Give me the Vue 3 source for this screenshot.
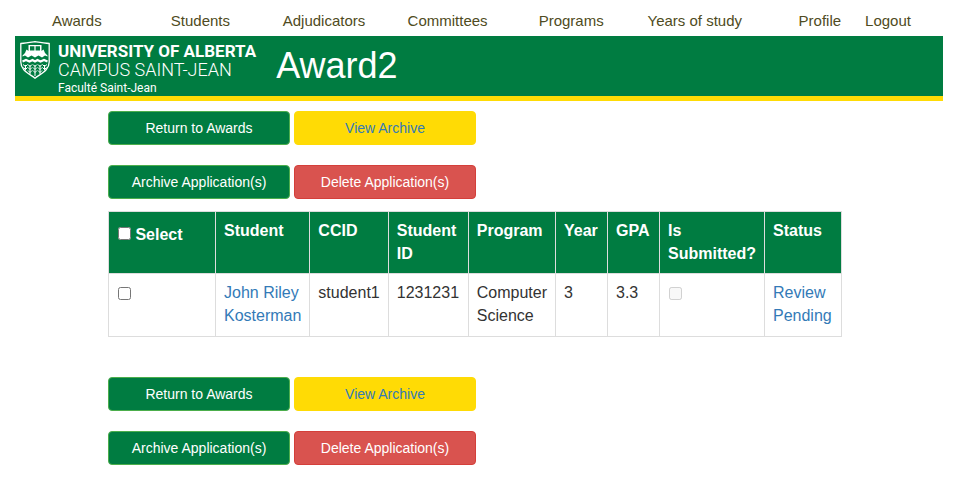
<script setup>
import { ref } from 'vue'

const links = ['Awards', 'Students', 'Adjudicators', 'Committees', 'Programs', 'Years of study']
const account = ['Profile', 'Logout']
const selectAll = ref(false)
const selected = ref([])
const applications = [
  {
    ccid: 'student1',
    name: 'John Riley Kosterman',
    id: '1231231',
    program: 'Computer Science',
    year: 3,
    gpa: '3.3',
    submitted: false,
    status: 'Review Pending',
  },
]

function toggleAll() {
  selected.value = selectAll.value ? applications.map((a) => a.ccid) : []
}
</script>

<template>
  <div class="page">
    <nav class="nav">
      <a v-for="link in links" :key="link" class="nav-main" href="#">{{ link }}</a>
      <div class="nav-account">
        <a v-for="link in account" :key="link" href="#">{{ link }}</a>
      </div>
    </nav>

    <header class="banner">
      <div class="brand">
        <svg class="shield" viewBox="0 0 30 38" width="30" height="38" aria-hidden="true">
          <path d="M.8 2.500C6 2.200 10 1.500 15 .7C20 1.500 24 2.200 29.200 2.500V21C29.200 29 22 32 15 37.200C8 32 .8 29 .8 21Z" fill="none" stroke="#fff" stroke-width="1.300" />
          <path d="M2.500 14.500L5 12L6.500 8.500L8.500 10V4H21.500V10L23.500 8.500L25 12L27.500 14.500V15.500L25 14.500L22 16.500L18.500 14.500L15 16.500L11.500 14.500L8 16.500L5 14.500L2.500 15.500Z" fill="#fff" />
          <path d="M10 5.300H14.400V9.500H10ZM15.600 5.300H20V9.500H15.600Z" fill="#007c41" />
          <path d="M2.500 20.500L6 19L9.500 20.500L12.500 19L15 20.500L17.500 19L20.500 20.500L24 19L27.500 20.500" fill="none" stroke="#fff" stroke-width="2.200" />
          <path d="M5.500 24V29M10 24V33M15 24V35M20 24V33M24.500 24V29" stroke="#fff" stroke-width="1" />
          <path d="M3 23.500L5.500 25.500L7.500 23.500M3.500 26.500L5.500 28.500L7.500 26.500M8 23.500L10 25.500L12 23.500M8 26.500L10 28.500L12 26.500M8 29.500L10 31.500L12 29.500M13 23.500L15 25.500L17 23.500M13 26.500L15 28.500L17 26.500M13 29.500L15 31.500L17 29.500M18 23.500L20 25.500L22 23.500M18 26.500L20 28.500L22 26.500M18 29.500L20 31.500L22 29.500M22.500 23.500L24.500 25.500L27 23.500M22.500 26.500L24.500 28.500L26.500 26.500" fill="none" stroke="#fff" stroke-width="1" />
        </svg>
        <div class="wordmark">
          <span class="university">UNIVERSITY OF ALBERTA</span>
          <span class="campus">CAMPUS SAINT-JEAN</span>
          <span class="faculty">Faculté Saint-Jean</span>
        </div>
      </div>
      <h1 class="title">Award2</h1>
    </header>

    <main class="content">
      <div class="actions">
        <button type="button" class="btn btn-green">Return to Awards</button>
        <button type="button" class="btn btn-gold">View Archive</button>
        <button type="button" class="btn btn-green">Archive Application(s)</button>
        <button type="button" class="btn btn-red">Delete Application(s)</button>
      </div>

      <table class="applications">
        <thead>
          <tr>
            <th class="col-select">
              <label><input v-model="selectAll" type="checkbox" @change="toggleAll" /> Select</label>
            </th>
            <th class="col-student">Student</th>
            <th class="col-ccid">CCID</th>
            <th class="col-id">Student ID</th>
            <th class="col-program">Program</th>
            <th class="col-number">Year</th>
            <th class="col-number">GPA</th>
            <th class="col-submitted">Is Submitted?</th>
            <th class="col-status">Status</th>
          </tr>
        </thead>
        <tbody>
          <tr v-for="app in applications" :key="app.ccid">
            <td><input v-model="selected" type="checkbox" :value="app.ccid" :aria-label="app.name" /></td>
            <td><a href="#">{{ app.name }}</a></td>
            <td>{{ app.ccid }}</td>
            <td>{{ app.id }}</td>
            <td>{{ app.program }}</td>
            <td>{{ app.year }}</td>
            <td>{{ app.gpa }}</td>
            <td><input type="checkbox" :checked="app.submitted" disabled aria-label="Is Submitted?" /></td>
            <td><a href="#">{{ app.status }}</a></td>
          </tr>
        </tbody>
      </table>

      <div class="actions">
        <button type="button" class="btn btn-green">Return to Awards</button>
        <button type="button" class="btn btn-gold">View Archive</button>
        <button type="button" class="btn btn-green">Archive Application(s)</button>
        <button type="button" class="btn btn-red">Delete Application(s)</button>
      </div>
    </main>
  </div>
</template>

<style>
body {
  background: #fff;
}
</style>

<style scoped>
* {
  box-sizing: border-box;
}
.page {
  padding: 0 15px;
  font-family: "Liberation Sans", Arial, sans-serif;
  font-size: 16px;
  line-height: 1.42;
  color: #333;
}
a {
  color: #337ab7;
  text-decoration: none;
}
.nav {
  display: flex;
  align-items: center;
  height: 36px;
  padding-top: 6px;
  font-size: 15px;
}
.nav a {
  color: #4f4b22;
}
.nav-main {
  flex: 1 1 0;
  text-align: center;
}
.nav-account {
  display: flex;
  gap: 24px;
  padding: 0 32px 0 42px;
}
.banner {
  display: flex;
  gap: 20px;
  height: 65px;
  padding: 5px 5px 0;
  background: #007c41;
  border-bottom: 5px solid #ffdb05;
  color: #fff;
}
.brand {
  display: flex;
  gap: 8px;
}
.wordmark {
  display: flex;
  flex-direction: column;
  font-family: Roboto, sans-serif;
  white-space: nowrap;
}
.university {
  font-size: 17px;
  font-weight: 700;
  line-height: 20px;
}
.campus {
  font-size: 18px;
  font-weight: 300;
  line-height: 18px;
}
.faculty {
  font-size: 12px;
  line-height: 18px;
}
.title {
  margin: 0;
  font-size: 36px;
  font-weight: 400;
  line-height: 50px;
}
.content {
  padding: 10px 93px;
}
.actions {
  display: grid;
  grid-template-columns: repeat(2, 182px);
  gap: 20px 4px;
}
.btn {
  height: 34px;
  border: 1px solid;
  border-radius: 4px;
  font: 14px/20px "Liberation Sans", Arial, sans-serif;
  color: #fff;
  cursor: pointer;
}
.btn-green {
  background: #007c41;
  border-color: #4cae4c;
}
.btn-gold {
  background: #ffdb05;
  border-color: #ffdb05;
  color: #337ab7;
}
.btn-red {
  background: #d9534f;
  border-color: #d43f3a;
}
.applications {
  margin: 12px 0 40px;
  border-collapse: collapse;
}
th,
td {
  padding: 8px;
  border: 1px solid #ddd;
  text-align: left;
  vertical-align: top;
}
th {
  background: #007c41;
  color: #fff;
}
.col-select {
  width: 107px;
}
.col-student {
  width: 94px;
}
.col-ccid {
  width: 77px;
}
.col-id {
  width: 80px;
}
.col-program {
  width: 87px;
}
.col-number {
  width: 52px;
}
.col-submitted {
  width: 105px;
}
.col-status {
  width: 77px;
}
input[type='checkbox'] {
  width: 13px;
  height: 13px;
  margin: 5px 1px 0;
}
th input[type='checkbox'] {
  margin: 7px 0 0 1px;
}
</style>
